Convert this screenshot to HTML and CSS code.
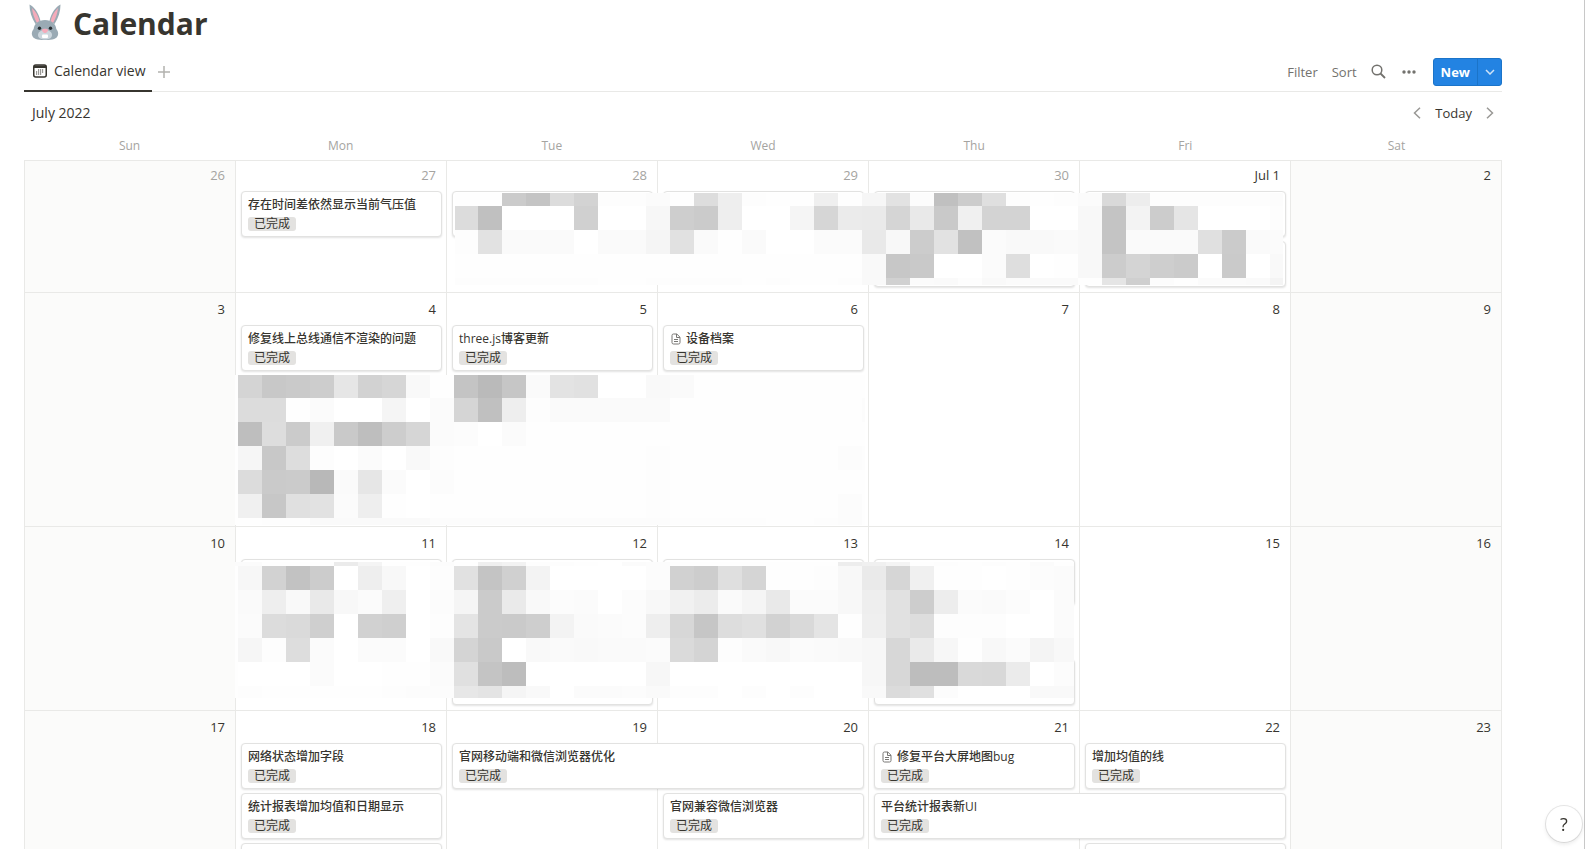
FILE: index.html
```html
<!DOCTYPE html>
<html lang="en">
<head>
<meta charset="utf-8">
<title>Calendar</title>
<link rel="stylesheet" href="styles.css">
</head>
<body>
<svg class="sprite">
  <symbol id="doc" viewBox="0 0 10 12"><path d="M1 2.500A1.500 1.500 0 0 1 2.500 1H5.800L9 4.200V9.500A1.500 1.500 0 0 1 7.500 11H2.500A1.500 1.500 0 0 1 1 9.500ZM5.500 1V4.500H9M3 6.500H7M3 8.500H7" fill="none" stroke="#787774"/></symbol>
</svg>
<main class="page">
  <header class="title">
    <svg class="rabbit" viewBox="0 0 32 36" aria-hidden="true">
      <path d="M0.500 0.500C5 3 9.500 8 11.500 17L6.500 20C2.500 14 0.500 7 0.500 0.500ZM31.500 0.500C27 3 22.500 8 20.500 17L25.500 20C29.500 14 31.500 7 31.500 0.500Z" fill="#9aaab4"/>
      <path d="M3 4C7 8 9.500 12 10.500 17.500L8 19C5 14 3.500 9 3 4ZM29 4C25 8 22.500 12 21.500 17.500L24 19C27 14 28.500 9 29 4Z" fill="#f4abba"/>
      <path d="M16 16C22.500 16 27 20 27.300 25C29 27 29.500 29 29 31C28 35 24 36 16 36S4 35 3 31C2.500 29 3 27 4.700 25C5 20 9.500 16 16 16Z" fill="#9aaab4"/>
      <path d="M16 26C20 26 23 28 23 31C23 34 20 35.500 16 35.500S9 34 9 31C9 28 12 26 16 26Z" fill="#ccd6dd"/>
      <path d="M13 25.500C14 24.600 18 24.600 19 25.500C19.500 27 17.500 29 16 29S12.500 27 13 25.500Z" fill="#f4abba"/>
      <rect x="13" y="30.500" width="6" height="3.500" rx="1" fill="#fff"/>
      <circle cx="10.500" cy="24.300" r="1.700" fill="#292f33"/><circle cx="21.500" cy="24.300" r="1.700" fill="#292f33"/>
    </svg>
    <h1>Calendar</h1>
  </header>

  <nav class="bar">
    <button class="tab"><svg width="14" height="14" viewBox="0 0 14 14" aria-hidden="true"><rect x=".75" y="1" width="12.500" height="12" rx="2" fill="none" stroke="#37352f" stroke-width="1.500"/><path d="M1 1.500H13V4H1Z" fill="#37352f"/><path d="M5 6h1.200M7 6h1.200M9 6h1.200M3 8h1.200M5 8h1.200M7 8h1.200M9 8h1.200M3 10h1.200M5 10h1.200M7 10h1.200" stroke="#37352f" stroke-width="1"/></svg>Calendar view</button>
    <button class="add" aria-label="Add view"><svg width="12" height="12" viewBox="0 0 12 12"><path d="M6 0V12M0 6H12" stroke="#b3b2af" stroke-width="1.500"/></svg></button>
    <div class="tools">
      <button>Filter</button>
      <button>Sort</button>
      <button aria-label="Search"><svg width="15" height="15" viewBox="0 0 15 15"><circle cx="6" cy="6" r="4.800" fill="none" stroke="#73726e" stroke-width="1.500"/><path d="M9.500 9.500L14 14" stroke="#73726e" stroke-width="1.800"/></svg></button>
      <button class="dots" aria-label="More"><svg width="14" height="4" viewBox="0 0 14 4"><g fill="#73726e"><circle cx="2" cy="2" r="1.700"/><circle cx="7" cy="2" r="1.700"/><circle cx="12" cy="2" r="1.700"/></g></svg></button>
      <div class="split"><button class="new">New</button><button class="drop" aria-label="Templates"><svg width="10" height="6" viewBox="0 0 10 6"><path d="M1 1L5 5L9 1" fill="none" stroke="#cfe3f7" stroke-width="1.500"/></svg></button></div>
    </div>
  </nav>

  <div class="month">
    <h2>July 2022</h2>
    <button aria-label="Previous month"><svg width="8" height="12" viewBox="0 0 8 12"><path d="M7 .7L1.500 6L7 11.300" fill="none" stroke="#999895" stroke-width="1.500"/></svg></button>
    <button class="today">Today</button>
    <button aria-label="Next month"><svg width="8" height="12" viewBox="0 0 8 12"><path d="M1 .7L6.500 6L1 11.300" fill="none" stroke="#999895" stroke-width="1.500"/></svg></button>
  </div>

  <div class="names"><span>Sun</span><span>Mon</span><span>Tue</span><span>Wed</span><span>Thu</span><span>Fri</span><span>Sat</span></div>

  <section class="calendar">
    <div class="week first">
      <div class="day off past c1">26</div><div class="day past c2">27</div><div class="day past c3">28</div><div class="day past c4">29</div><div class="day past c5">30</div><div class="day c6">Jul 1</div><div class="day off c7">2</div>
      <article class="card c2 s1"><h3>存在时间差依然显示当前气压值</h3><span class="tag">已完成</span></article>
      <article class="card c3 s1"></article><article class="card c4 s1"></article><article class="card c5 s1"></article><article class="card c5 s2"></article><article class="card c6 s1"></article><article class="card c6 s2"></article>
      <svg class="mosaic" data-mosaic="0" viewBox="25 161 1477 131" preserveAspectRatio="none" aria-hidden="true"></svg>
    </div>
    <div class="week four">
      <div class="day off c1">3</div><div class="day c2">4</div><div class="day c3">5</div><div class="day c4">6</div><div class="day c5">7</div><div class="day c6">8</div><div class="day off c7">9</div>
      <article class="card c2 s1"><h3>修复线上总线通信不渲染的问题</h3><span class="tag">已完成</span></article>
      <article class="card c3 s1"><h3>three.js博客更新</h3><span class="tag">已完成</span></article>
      <article class="card c4 s1"><h3><svg class="doc"><use href="#doc"/></svg>设备档案</h3><span class="tag">已完成</span></article>
      <svg class="mosaic" data-mosaic="1" viewBox="25 293 1477 233" preserveAspectRatio="none" aria-hidden="true"></svg>
    </div>
    <div class="week three">
      <div class="day off c1">10</div><div class="day c2">11</div><div class="day c3">12</div><div class="day c4">13</div><div class="day c5">14</div><div class="day c6">15</div><div class="day off c7">16</div>
      <article class="card c2 s1"></article><article class="card c3 s1"></article><article class="card c3 s3"></article><article class="card c4 s1"></article><article class="card c5 s1"></article><article class="card c5 s3"></article>
      <svg class="mosaic" data-mosaic="2" viewBox="25 527 1477 183" preserveAspectRatio="none" aria-hidden="true"></svg>
    </div>
    <div class="week three">
      <div class="day off c1">17</div><div class="day c2">18</div><div class="day c3">19</div><div class="day c4">20</div><div class="day c5">21</div><div class="day c6">22</div><div class="day off c7">23</div>
      <article class="card c2 s1"><h3>网络状态增加字段</h3><span class="tag">已完成</span></article>
      <article class="card c3 s1 wide"><h3>官网移动端和微信浏览器优化</h3><span class="tag">已完成</span></article>
      <article class="card c5 s1"><h3><svg class="doc"><use href="#doc"/></svg>修复平台大屏地图bug</h3><span class="tag">已完成</span></article>
      <article class="card c6 s1"><h3>增加均值的线</h3><span class="tag">已完成</span></article>
      <article class="card c2 s2"><h3>统计报表增加均值和日期显示</h3><span class="tag">已完成</span></article>
      <article class="card c4 s2"><h3>官网兼容微信浏览器</h3><span class="tag">已完成</span></article>
      <article class="card c5 s2 wide"><h3>平台统计报表新UI</h3><span class="tag">已完成</span></article>
      <article class="card c2 s3"></article><article class="card c6 s3"></article>
    </div>
  </section>
</main>
<button class="help" aria-label="Help">?</button>
<script src="mosaic.js"></script>
</body>
</html>
```
FILE: styles.css
```css
* { box-sizing: border-box; }
body {
  margin: 0;
  background: #fff;
  color: #37352f;
  font: 14px/20px "Open Sans", "Noto Sans CJK SC", sans-serif;
}
button {
  border: 0;
  padding: 0;
  background: none;
  color: inherit;
  font: inherit;
  display: flex;
  align-items: center;
  justify-content: center;
}
h1, h2, h3 { margin: 0; }
.sprite { display: none; }

.page {
  height: 100vh;
  overflow: hidden;
  padding: 0 82px 0 24px;
  border-right: 1px solid #c8c8c8;
}
.title { display: flex; align-items: center; gap: 12px; height: 48px; padding-left: 5px; }
.title h1 { font-size: 30px; line-height: 40px; font-weight: 700; }
.rabbit { width: 32px; height: 36px; margin-top: -4px; }

.bar { display: flex; align-items: stretch; height: 44px; border-bottom: 1px solid #e9e9e7; }
.tab {
  gap: 7px;
  height: 44px;
  padding: 4px 6px 0 9px;
  border-bottom: 2px solid #37352f;
  font-size: 14px;
  font-weight: 500;
}
.add { padding: 4px 6px 0; }
.tools {
  display: flex;
  align-items: center;
  gap: 14px;
  margin-left: auto;
  padding-top: 4px;
  color: #73726e;
  font-size: 13px;
}
.dots { padding: 0 3px 0 2px; }
.split {
  display: flex;
  height: 28px;
  border: 1px solid #1b74c9;
  border-radius: 3px;
  background: #2383e2;
  color: #fff;
  font-weight: 700;
}
.new { padding: 0 7px; }
.drop { width: 24px; border-left: 1px solid #1b74c9; }

.month { display: flex; align-items: center; height: 42px; padding: 0 8px; gap: 14px; }
.month h2 { margin-right: auto; font-size: 14px; line-height: 20px; font-weight: 500; }
.today { font-size: 13px; }

.names {
  display: grid;
  grid-template-columns: repeat(7, 1fr);
  height: 26px;
  color: #a5a4a1;
  font-size: 12px;
  line-height: 24px;
  text-align: center;
}

.calendar { border: 1px solid #e9e9e7; border-right: 0; }
.week {
  position: relative;
  display: grid;
  grid-template-columns: repeat(7, minmax(0, 1fr));
  border-bottom: 1px solid #e9e9e7;
}
.first { grid-template-rows: 30px repeat(2, minmax(50px, auto)) 1px; }
.three { grid-template-rows: 32px repeat(3, minmax(50px, auto)) 1px; }
.four { grid-template-rows: 32px repeat(4, minmax(50px, auto)) 1px; }

.day {
  grid-row: 1 / -1;
  padding: 6px 10px 0 0;
  border-right: 1px solid #e9e9e7;
  font-size: 13px;
  text-align: right;
}
.first .day { padding-top: 4px; }
.off { background: #fbfbfa; }
.past { color: #a5a4a1; }

.c1 { grid-column: 1; }
.c2 { grid-column: 2; }
.c3 { grid-column: 3; }
.c4 { grid-column: 4; }
.c5 { grid-column: 5; }
.c6 { grid-column: 6; }
.c7 { grid-column: 7; }
.c3.wide { grid-column: 3 / span 2; }
.c5.wide { grid-column: 5 / span 2; }
.s1 { grid-row: 2; }
.s2 { grid-row: 3; }
.s3 { grid-row: 4; }

.card {
  position: relative;
  margin: 0 5px 4px;
  padding: 3px 6px;
  border: 1px solid #e2e2e1;
  border-radius: 4px;
  background: #fff;
  box-shadow: 0 1px 2px rgba(15, 15, 15, .12);
}
.card h3 {
  display: flex;
  align-items: center;
  height: 20px;
  font-size: 12px;
  line-height: 20px;
  font-weight: 500;
  white-space: nowrap;
}
.tag {
  display: block;
  width: max-content;
  margin-top: 2px;
  padding: 0 6px;
  border-radius: 3px;
  background: #e3e2e0;
  font-size: 12px;
  line-height: 14px;
}
.doc { width: 10px; height: 12px; margin: 0 5px 0 1px; }

.mosaic { position: absolute; inset: 0; width: 100%; height: 100%; shape-rendering: crispEdges; }

.help {
  position: fixed;
  right: 3px;
  bottom: 7px;
  width: 36px;
  height: 36px;
  border-radius: 50%;
  background: #fff;
  box-shadow: 0 0 0 1px rgba(15, 15, 15, .1), 0 2px 4px rgba(15, 15, 15, .1);
  font-size: 18px;
}
```
FILE: mosaic.js
```js
// Grey censor blocks: each row is a run of two-digit hex grey levels, one per 24-unit cell.
const CELL = 24;
const mosaics = [
  { start: 454, left: 455, right: 1283, edges: [193, 206, 230, 254, 278, 285], rows: [
    "fe fe cb c4 dc d3 fd fd fb fe dd ee fd fe fe ef fe f6 e2 fc c0 cc df fd fe fd fb d9 ed fd fd fd fd fd fc",
    "dc c0 ff ff ff d0 ff ff f7 ce cb ee ff ff f5 d6 eb ea d5 e9 c9 f0 d3 d3 ff ff f8 c4 f3 cc e5 ff ff ff fd",
    "fd e2 fa fa fa ff fa fa f5 e1 fa fe fa ff ff fb fb e9 f8 cc e2 c1 fb f9 f9 fa f8 c4 fa fa fa e0 cb fa fb",
    "fe fe fe fe fe fe fe fe fe fe fe fe fe fe fe fe fe f9 c7 c9 ff ff fb de ff fe f8 cc d4 ce cb ff ca ff f9",
    "fd fd fd fd fd fd fe fe fd fd fd fd fe fd fe fe fd f9 d1 fb fa fd f9 fb fa fa fe e5 cf fc fe fb fb fa f4"
  ] },
  { start: 214, left: 235, right: 865, edges: [375, 398, 422, 446, 470, 494, 518, 525], rows: [
    "fe d4 c8 ca cd e6 d2 d6 f9 fe c4 ba c6 fa e3 e1 ff ff f9 fa fe fe fe fe fe fe fe fe",
    "fe dc dc fe fb ff ff f5 ff fb d5 c0 ee fd fa fa fa fa fa fe fe fe fe fe fe fe fe fc",
    "fe be dd cb f0 c9 be cd d6 fb fc ff fb fe fe fe fe fe fe fe fe fe fe fe fe fe fe fe",
    "fe f6 c8 dd fd ff fb ff f9 fd fe fe fe fe fe fe fe fe fd fe fe fe fe fe fe fe fc fd",
    "fe dc ca cb b8 fa e6 fb ff fc fe fe fe fe fe fe fe fe fd fe fe fe fe fe fe fe fe fe",
    "fe f0 c7 e0 e2 fb ee fe ff fe fe fe fe fe fe fe fe fe fd fe fe fe fe fe fe fe fc fe",
    "fe fe fd fd fa fa fa fa fa fc fc fc fc fc fc fc fc fc fc fd fd fd fd fe fe fd fc fe"
  ] },
  { start: 214, left: 235, right: 1074, edges: [562, 566, 590, 614, 638, 662, 686, 698], rows: [
    "fb fb fe fe fe eb f4 fe fe fc fe ef f2 fd fd fe ff fb fc fe fe fe fe fe fe fe ed f0 f4 fe fd fe fd fe fb fe",
    "fe f7 d2 c2 cc ff ee f8 ff fd e1 c4 d0 f3 ff ff ff ff fc d1 cd df d5 fe fe fd f8 ea d6 f0 fe fe ff fe fc fb",
    "fe fa ee f9 e9 f8 fb ef ff fc f5 cb ea f9 fc fb ff fc f8 f1 ec fa f5 e9 fb fb f8 ee e1 cd ed fb fa fc ff fb",
    "fe fb dc da cf ff d1 cf ff fd e4 cb ca ce f3 fa fb fc ee d7 c6 dd e0 d2 d9 e4 fe ef e1 dd fd fd fd ff ff fb",
    "fe f6 fd dd fb ff fb fb ff f9 d4 c9 ff f9 fa f9 fa fa fb da d4 fd fa f8 fb fa f9 f7 d7 ea f7 fe f8 fb f4 f8",
    "fe ff ff ff fb ff ff fe fe fb e0 c4 bd ff ff ff ff ff f7 ff ff ff ff ff ff ff ff f7 d7 bd bd d9 d8 eb ff fc",
    "fe fd fe fe fe fe fe fd fc fc e7 e4 f5 f9 ff fb fb fc fa fd fd ff fd ff fd ff ff f9 db e0 fc ff ff ff f9 f9"
  ] }
];

document.querySelectorAll("[data-mosaic]").forEach((svg) => {
  const { start, left, right, edges, rows } = mosaics[svg.dataset.mosaic];
  rows.forEach((row, r) => {
    row.split(" ").forEach((grey, i) => {
      const x0 = Math.max(left, start + i * CELL);
      const x1 = Math.min(right, start + (i + 1) * CELL);
      const rect = document.createElementNS("http://www.w3.org/2000/svg", "rect");
      rect.setAttribute("x", x0);
      rect.setAttribute("y", edges[r]);
      rect.setAttribute("width", x1 - x0);
      rect.setAttribute("height", edges[r + 1] - edges[r]);
      rect.setAttribute("fill", "#" + grey.repeat(3));
      svg.append(rect);
    });
  });
});
```
